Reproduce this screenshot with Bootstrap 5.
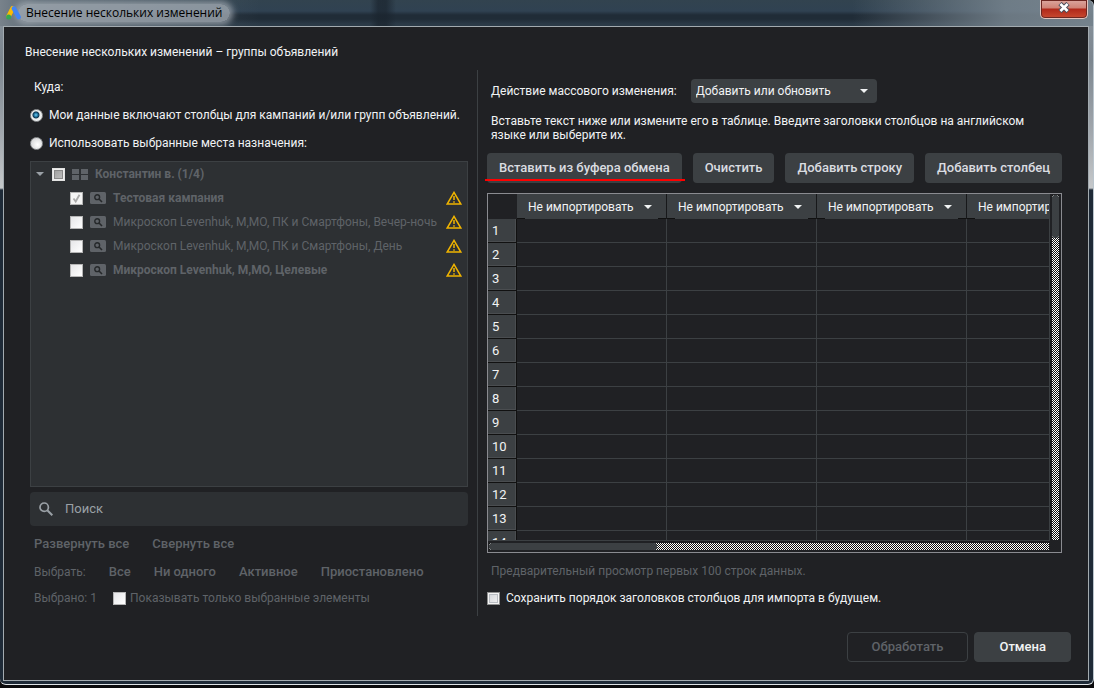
<!DOCTYPE html>
<html lang="ru">
<head>
<meta charset="utf-8">
<meta name="viewport" content="width=device-width, initial-scale=1">
<title>Внесение нескольких изменений</title>
<link href="https://cdn.jsdelivr.net/npm/bootstrap@5.3.0/dist/css/bootstrap.min.css" rel="stylesheet">
<style>
  :root { --ink: #f1f3f4; --dim: #5f6368; --panel: #202124; --field: #2d3033; --control: #3c4043; }
  body { background: #0b0b0d; color: var(--ink); font: 12px/14px Roboto, "Liberation Sans", sans-serif; }
  button, input, select { font: inherit; color: inherit; }

  /* window frame */
  .frame { padding: 0 4px 3px 3px; border-bottom: 1px solid #dfe3e6; border-right: 1px solid #b9c4cc; border-radius: 0 6px 6px 6px;
    background: linear-gradient(#8a949d 0, #7c868f 60px, #a0a6ac 130px, #c5c8ca 188px, #1e2a37 190px, #1e2a37 100%); }
  .shell { min-height: 100vh; padding-bottom: 3px; }
  .titlebar { height: 26px; margin: 0 -4px 0 -3px; padding-left: 6px; border-radius: 0 6px 0 0;
    background: linear-gradient(90deg, #78828b 0, rgba(110,122,132,.6) 40px, transparent 260px),
      linear-gradient(90deg, transparent 78%, rgba(125,138,148,.8) 92%, rgba(125,138,148,.9)),
      linear-gradient(90deg, transparent 370px, rgba(26,36,46,.7) 378px, rgba(26,36,46,.7) 386px, transparent 396px),
      linear-gradient(#32434f 0, #304252 11px, #202c37 15px, #202c37 19px, #2b3a47 24px, #2b3a47 26px); }
  .window-title { font-family: "Open Sans", sans-serif; color: #000; padding: 0 8px; margin-left: -4px; border-radius: 9px; line-height: 18px;
    background: rgba(165,174,181,.75); box-shadow: 0 0 6px 3px rgba(165,174,181,.75); }
  .close-btn { width: 48px; height: 19px; margin-right: 5px; border: 1px solid #e3c4be; border-top: 0; border-radius: 0 0 5px 5px;
    background: linear-gradient(#dba79f 0, #cf8376 8px, #b0281a 9px, #c94a30 18px); box-shadow: inset 0 0 0 1px #6d2721; }
  .surface { background: var(--panel); border: 1px solid #a3abb0; }

  .heading-line { padding: 15px 21px 8px; line-height: 20px; }
  .panes { display: grid; grid-template-columns: minmax(0, 438fr) 1px minmax(0, 575fr); gap: 9px; padding: 0 26px; }
  .divider { background: var(--control); }
  .left-pane { padding: 3px 0 6px; }
  .right-pane { padding: 9px 0 6px; }
  .line-28 { height: 28px; }
  .line-24 { height: 24px; }
  .inset-4 { padding-left: 4px; padding-right: 4px; }
  .gap-6 { gap: 6px; }
  .gap-23 { gap: 23px; }

  .box, .dot { appearance: none; flex: none; margin: 0; width: 13px; height: 13px; }
  .box { border: 1px solid #b5b5b5; background: linear-gradient(135deg, #e6e6e8, #fff); }
  .box-inner { border-color: #8e8f8f; background: linear-gradient(135deg, #cfd2d6, #f4f4f4); box-shadow: inset 0 0 0 1px #f4f4f4, inset 0 0 0 2px #b9bdc2; }
  .box-part { border-color: #e2e2e2; background: linear-gradient(135deg, #9a9a9a, #c4c4c4); box-shadow: inset 0 0 0 1px #eee, inset 0 0 0 2px #888; }
  .box-ticked { background: #f4f4f4 url("data:image/svg+xml,%3Csvg xmlns='http://www.w3.org/2000/svg' viewBox='0 0 11 11'%3E%3Cpath d='M2.5 5.5 4.7 8.5 8.5 1.8' fill='none' stroke='%23aaa' stroke-width='1.8'/%3E%3C/svg%3E"); }
  .dot { border: 1px solid #8f9294; border-radius: 50%; background: radial-gradient(circle at 60% 60%, #fff, #c9cbcd); }
  .dot:checked { background: radial-gradient(circle at 45% 45%, #6fd0f5 0, #1b6c98 2px, #0d3550 3px, #eceeef 4px); }

  .tree { background: var(--field); border: 1px solid var(--control); color: var(--dim); padding-right: 5px; min-height: 0; margin-bottom: 5px; }
  .branch { height: 24px; }
  .branch .kind { margin: 0 7px; }
  .child { padding-left: 39px; }
  .search { height: 34px; background: var(--field); border-radius: 4px; padding-left: 9px; color: #9aa0a6; }
  .search input { background: none; border: 0; outline: 0; font-size: 13px; }
  .search input::placeholder { color: #9aa0a6; opacity: 1; }
  .text-action { border: 0; background: none; padding: 0; color: var(--dim); }
  .wide-face { font-family: "Google Sans", Roboto, sans-serif; font-size: 13px; font-weight: 500; }
  .muted { color: var(--dim); }

  .pick { appearance: none; border: 0; border-radius: 4px; background: var(--control) url("data:image/svg+xml,%3Csvg xmlns='http://www.w3.org/2000/svg' width='8' height='4'%3E%3Cpath d='M0 0h8L4 4z' fill='%23f1f3f4'/%3E%3C/svg%3E") no-repeat right 9px center; }
  .pick-action { width: 186px; height: 24px; padding: 0 5px; margin-left: 14px; }
  .hint { margin: 11px 0; }
  .tool-btn { height: 30px; border: 0; border-radius: 4px; background: var(--control); color: #dadce0; padding: 0 12px; white-space: nowrap; position: relative; }
  .tool-btn.underlined::after { content: ""; position: absolute; left: -2px; right: -3px; bottom: 2px; height: 2px; background: #f00; }
  .foot-btn { border-radius: 4px; height: 30px; border: 1px solid var(--control); background: var(--control); }
  .foot-btn:disabled { background: none; color: var(--dim); }

  /* spreadsheet preview */
  .sheet { display: grid; grid-template: minmax(0, 1fr) 11px / minmax(0, 1fr) 11px; border: 1px solid #8a8b90; min-height: 0; flex: 1 1 360px; height: 0; margin: 10px 0 6px; }
  .sheet-view { overflow: hidden; border: solid var(--control); border-width: 0 1px 1px 0; }
  .sheet table { table-layout: fixed; width: 629px; border-collapse: separate; border-spacing: 0; }
  .sheet .number-col { width: 29px; }
  .sheet th, .sheet td { padding: 0; height: 24px; font-weight: 400; }
  .sheet thead th, .sheet thead td { height: 25px; }
  .sheet thead th { border-right: 1px solid #17181a; background: linear-gradient(#111, #111) 0 100% / 8px 1px no-repeat, linear-gradient(#111, #111) 100% 100% / 8px 1px no-repeat, var(--control); }
  .sheet .pick { display: block; width: 149px; height: 24px; padding: 0 11px; background-position: right 14px center; background-color: transparent; }
  .sheet tbody th { background: var(--control); border-right: 1px solid #111; border-bottom: 1px solid #111; padding-left: 4px; font-size: 13px; box-shadow: inset -1px -1px #4a4d50; }
  .sheet tbody td { border-right: 1px solid var(--control); border-bottom: 1px solid var(--control); }
  .track { background: repeating-conic-gradient(#fff 0 25%, #111 0 50%) 0 0 / 2px 2px; }
  .track-v { margin: 1px 2px; }
  .track-h { margin: 2px 1px; }
  .thumb { background: var(--control); border-radius: 3px; }
  .track-v .thumb { height: 43px; }
  .track-h .thumb { width: 30%; height: 100%; }
  .keep-order { margin-top: 3px; }
  .footer-row { padding: 16px 17px 18px; gap: 6px; }
</style>
</head>
<body>
<div class="shell d-flex flex-column">
<div class="frame flex-grow-1 d-flex flex-column">
  <header class="titlebar d-flex align-items-start justify-content-between">
    <div class="d-flex align-items-center pt-1">
      <svg width="16" height="14" viewBox="0 0 16 14" class="position-relative z-1" aria-hidden="true"><path d="M6.5 2.5 2.5 10.5" stroke="#fbbc04" stroke-width="4.6" stroke-linecap="round"/><path d="m8 2.6 4.6 8.4" stroke="#4285f4" stroke-width="4.6" stroke-linecap="round"/><circle cx="2.6" cy="11" r="2.5" fill="#34a853"/></svg>
      <span class="window-title">Внесение нескольких изменений</span>
    </div>
    <button class="close-btn p-0 pb-1 d-flex align-items-center justify-content-center" aria-label="Закрыть"><svg width="14" height="11" viewBox="0 0 14 11"><path d="m3 1.5 8 8m0-8-8 8" stroke="#4a4f5c" stroke-width="4.6"/><path d="m3.4 2 7.2 7m0-7-7.2 7" stroke="#fff" stroke-width="2.6"/></svg></button>
  </header>
  <main class="surface flex-grow-1 d-flex flex-column">
    <div class="heading-line">Внесение нескольких изменений – группы объявлений</div>
    <div class="panes flex-grow-1">
      <section class="left-pane d-flex flex-column">
        <div class="inset-4 line-28 d-flex align-items-center">Куда:</div>
        <label class="line-28 d-flex align-items-center gap-6 text-nowrap"><input type="radio" class="dot" name="target" checked>Мои данные включают столбцы для кампаний и/или групп объявлений.</label>
        <label class="line-28 d-flex align-items-center gap-6 mb-1"><input type="radio" class="dot" name="target">Использовать выбранные места назначения:</label>
        <div class="tree flex-grow-1" id="tree">
          <div class="branch d-flex align-items-center fw-bold">
            <svg width="17" height="4" viewBox="0 0 17 4" class="me-1"><path d="M5 0h8L9 4z" fill="#9aa0a6"/></svg>
            <input type="checkbox" class="box box-part" aria-label="Константин в." disabled>
            <svg width="16" height="11" viewBox="0 0 16 11" class="kind"><path d="M0 0h7v5H0zM9 0h7v5H9zM0 6h7v5H0zM9 6h7v5H9z" fill="#5f6368"/></svg>Константин в. (1/4)
          </div>
        </div>
        <div class="search d-flex align-items-center">
          <svg width="14" height="14" viewBox="0 0 14 14" fill="none" stroke="#9aa0a6"><circle cx="5.2" cy="5.2" r="4.2" stroke-width="1.7"/><path d="m8.3 8.3 5 5" stroke-width="2"/></svg>
          <input type="text" class="flex-grow-1 ms-2 ps-1" placeholder="Поиск" aria-label="Поиск">
        </div>
        <div class="inset-4 line-28 d-flex align-items-center gap-23 mt-1"><button class="text-action wide-face">Развернуть все</button><button class="text-action wide-face">Свернуть все</button></div>
        <div class="inset-4 line-28 d-flex align-items-center gap-23 muted"><span>Выбрать:</span><button class="text-action wide-face">Все</button><button class="text-action wide-face">Ни одного</button><button class="text-action wide-face">Активное</button><button class="text-action wide-face">Приостановлено</button></div>
        <div class="inset-4 line-24 d-flex align-items-center muted gap-3"><span>Выбрано: 1</span><label class="d-flex align-items-center gap-1"><input type="checkbox" class="box" disabled>Показывать только выбранные элементы</label></div>
      </section>
      <div class="divider"></div>
      <section class="right-pane d-flex flex-column">
        <div class="d-flex align-items-center inset-4"><label for="action">Действие массового изменения:</label><select id="action" class="pick pick-action"><option>Добавить или обновить</option></select></div>
        <p class="inset-4 hint">Вставьте текст ниже или измените его в таблице. Введите заголовки столбцов на английском языке или выберите их.</p>
        <div class="d-flex justify-content-between"><button class="tool-btn wide-face underlined">Вставить из буфера обмена</button><button class="tool-btn wide-face">Очистить</button><button class="tool-btn wide-face">Добавить строку</button><button class="tool-btn wide-face">Добавить столбец</button></div>
        <div class="sheet">
          <div class="sheet-view"><table>
            <colgroup><col class="number-col"><col><col><col><col></colgroup>
            <thead><tr id="heads"><td></td></tr></thead><tbody id="rows"></tbody>
          </table></div>
          <div class="track track-v"><div class="thumb"></div></div>
          <div class="track track-h"><div class="thumb"></div></div>
        </div>
        <div class="inset-4 line-24 d-flex align-items-center muted">Предварительный просмотр первых 100 строк данных.</div>
        <label class="keep-order line-24 d-flex align-items-center gap-6"><input type="checkbox" class="box box-inner">Сохранить порядок заголовков столбцов для импорта в будущем.</label>
      </section>
    </div>
    <footer class="footer-row d-flex justify-content-end"><button class="foot-btn wide-face px-4" disabled>Обработать</button><button class="foot-btn wide-face px-4">Отмена</button></footer>
  </main>
</div>
</div>
<script src="https://cdn.jsdelivr.net/npm/bootstrap@5.3.0/dist/js/bootstrap.bundle.min.js"></script>
<script>
  const campaigns = [
    ['Тестовая кампания', true, true],
    ['Микроскоп Levenhuk, М,МО, ПК и Смартфоны, Вечер-ночь', false, false],
    ['Микроскоп Levenhuk, М,МО, ПК и Смартфоны, День', false, false],
    ['Микроскоп Levenhuk, М,МО, Целевые', true, false]
  ];
  document.getElementById('tree').insertAdjacentHTML('beforeend', campaigns.map(([name, bold, on]) => `
    <label class="branch child d-flex align-items-center text-nowrap ${bold ? 'fw-bold' : ''}">
      <input type="checkbox" class="box ${on ? 'box-ticked' : ''}" ${on ? 'checked' : ''} disabled>
      <svg width="16" height="12" viewBox="0 0 16 12" class="kind"><rect width="16" height="12" rx="1.5" fill="#5f6368"/><circle cx="7.2" cy="5.2" r="2.4" fill="none" stroke="#25282a" stroke-width="1.4"/><path d="m9 7 3 3" stroke="#25282a" stroke-width="1.6"/></svg>
      <span class="me-auto">${name}</span>
      <svg width="16" height="14" viewBox="0 0 16 14"><path d="M8 1.4 14.8 13H1.2z" fill="none" stroke="#f0b400" stroke-width="1.5"/><path d="M8 5v4M8 10.2v1.5" stroke="#f0b400" stroke-width="1.5"/></svg>
    </label>`).join(''));
  document.getElementById('heads').insertAdjacentHTML('beforeend', [1, 2, 3, 4].map(n =>
    `<th><select class="pick" aria-label="Столбец ${n}"><option>Не импортировать</option></select></th>`).join(''));
  document.getElementById('rows').innerHTML = Array.from({length: 14}, (_, i) =>
    `<tr><th scope="row">${i + 1}</th><td></td><td></td><td></td><td></td></tr>`).join('');
</script>
</body>
</html>
